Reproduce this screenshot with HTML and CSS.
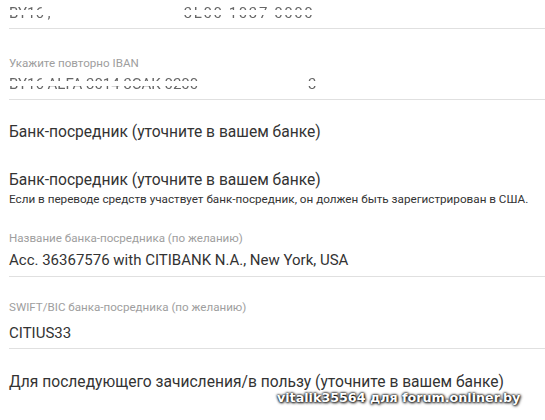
FILE: index.html
```html
<!DOCTYPE html>
<html lang="ru">
<head>
<meta charset="utf-8">
<link rel="stylesheet" href="styles.css">
</head>
<body>
<div class="page">
  <div class="field field-first">
    <div class="value value-redacted redacted-a"><span>BY16 ;</span><span class="gap-a"></span><span class="wide">3L00 1037 0000</span></div>
  </div>
  <div class="field field-iban">
    <div class="label">Укажите повторно IBAN</div>
    <div class="value value-redacted redacted-b"><span>BY16 ALFA 3014 3CAK 0200</span><span class="gap-b"></span><span class="faint">····</span><span class="gap-c"></span><span>3</span></div>
  </div>
  <div class="heading heading-1">Банк-посредник (уточните в вашем банке)</div>
  <div class="heading heading-2">Банк-посредник (уточните в вашем банке)</div>
  <div class="helper">Если в переводе средств участвует банк-посредник, он должен быть зарегистрирован в США.</div>
  <div class="field field-name">
    <div class="label">Название банка-посредника (по желанию)</div>
    <div class="value">Acc. 36367576 with CITIBANK N.A., New York, USA</div>
  </div>
  <div class="field field-swift">
    <div class="label">SWIFT/BIC банка-посредника (по желанию)</div>
    <div class="value">CITIUS33</div>
  </div>
  <div class="heading heading-3">Для последующего зачисления/в пользу (уточните в вашем банке)</div>
</div>
<div class="watermark">vitalik35564 для forum.onliner.by</div>
</body>
</html>
```

FILE: styles.css
```css
html, body {
  margin: 0;
  padding: 0;
  background: #ffffff;
  width: 545px;
  height: 420px;
  overflow: hidden;
}

body {
  font-family: Roboto, "Liberation Sans", Arial, sans-serif;
  color: #333333;
  position: relative;
}

.page {
  padding-left: 9px;
}

.field {
  border-bottom: 1px solid #e0e0e0;
}

.label {
  font-size: 11.6px;
  line-height: 16px;
  color: #9e9e9e;
  white-space: nowrap;
}

.value {
  font-size: 15px;
  line-height: 20px;
  color: #333333;
  white-space: nowrap;
}

.field-first {
  padding-top: 3px;
  padding-bottom: 5px;
}

.field-iban {
  padding-top: 26px;
  padding-bottom: 5px;
}

.field-iban .value {
  margin-top: 3px;
}

.value-redacted {
  display: flex;
  color: #666666;
  -webkit-mask-image: linear-gradient(to bottom, #000 0, #000 7px, transparent 7px, transparent 12px, #000 12px, #000 100%);
  mask-image: linear-gradient(to bottom, #000 0, #000 7px, transparent 7px, transparent 12px, #000 12px, #000 100%);
}

.redacted-a {
  -webkit-mask-image: linear-gradient(to bottom, #000 0, #000 7px, transparent 7px, transparent 12px, #000 12px, #000 100%);
  mask-image: linear-gradient(to bottom, #000 0, #000 7px, transparent 7px, transparent 12px, #000 12px, #000 100%);
}

.gap-a { width: 133px; }
.gap-b { width: 32px; }
.gap-c { width: 62px; }
.wide { letter-spacing: 1.6px; }
.faint { color: #aaaaaa; }

.heading {
  font-size: 15.6px;
  line-height: 20px;
  color: #333333;
  white-space: nowrap;
}

.heading-1 { margin-top: 22px; }
.heading-2 { margin-top: 28px; }

.helper {
  font-size: 11.7px;
  line-height: 14px;
  color: #333333;
  margin-top: 2px;
  white-space: nowrap;
}

.field-name {
  padding-top: 24px;
  padding-bottom: 6px;
}

.field-name .value { margin-top: 4px; }

.field-swift {
  padding-top: 22px;
  padding-bottom: 5px;
}

.field-swift .value { margin-top: 8px; }

.heading-3 { margin-top: 23px; }

.watermark {
  position: absolute;
  left: 277px;
  top: 391px;
  font-family: "DejaVu Sans", Verdana, sans-serif;
  font-weight: bold;
  font-size: 12.7px;
  line-height: 14px;
  color: #ffffff;
  white-space: nowrap;
  text-shadow: 0 0 2px #000, 0 0 3px #000, 1px 1px 3px #333;
}
```
